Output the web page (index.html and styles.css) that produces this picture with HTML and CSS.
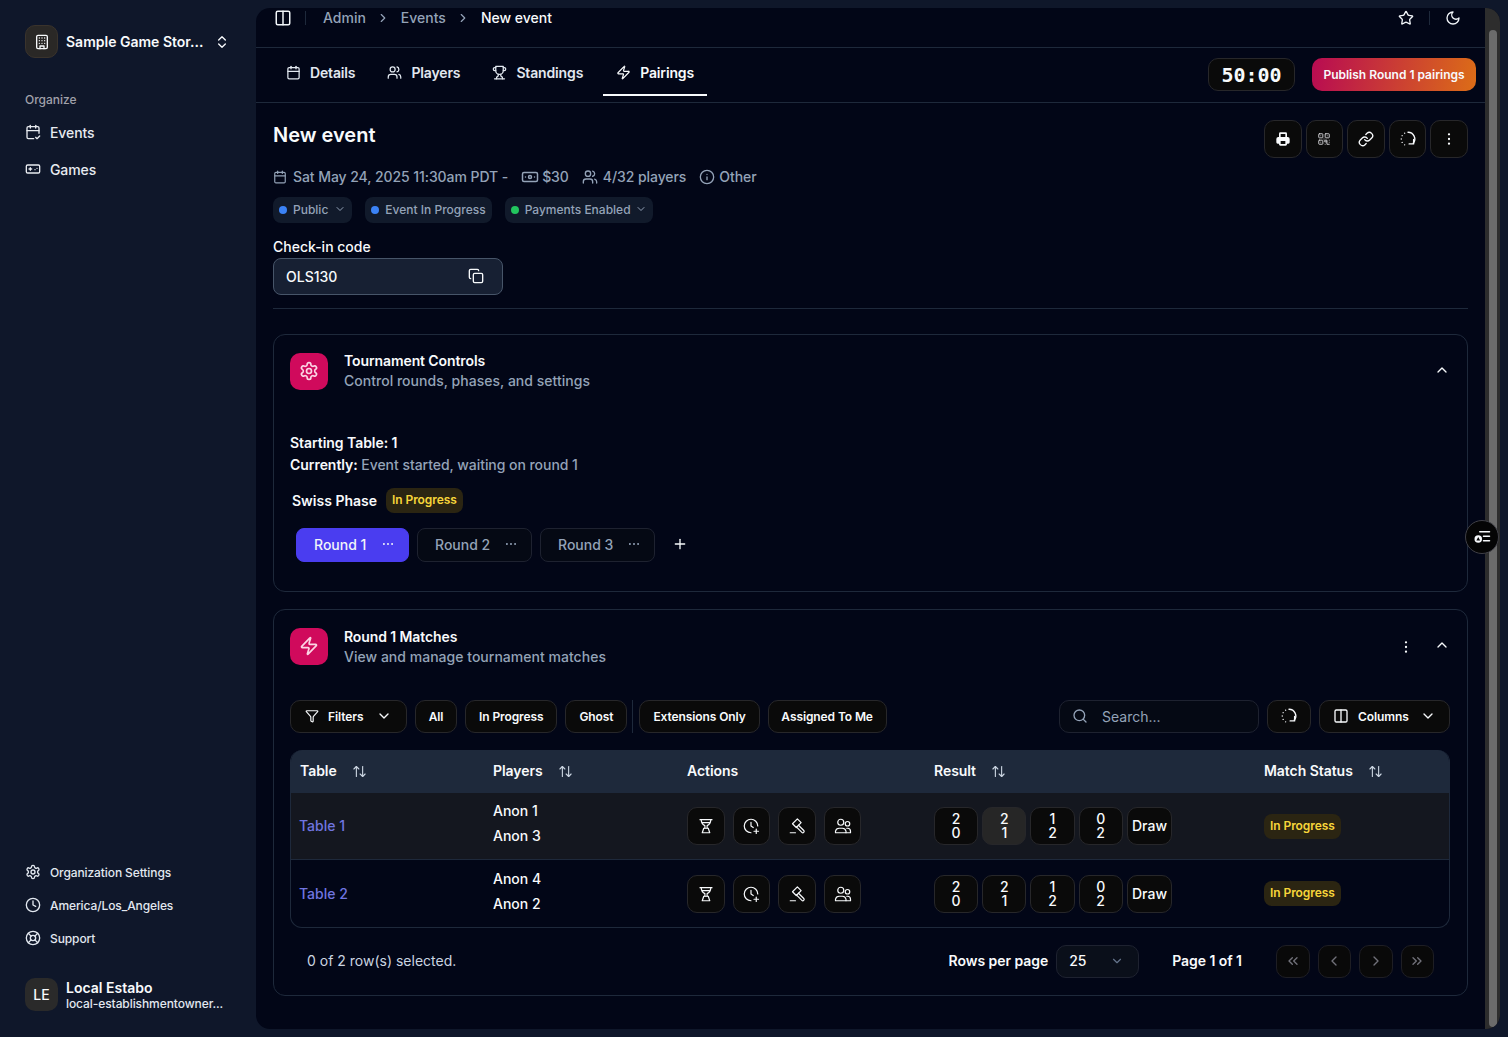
FILE: index.html
```html
<!DOCTYPE html>
<html lang="en">
<head>
  <meta charset="UTF-8">
  <title>New event</title>
  <link rel="stylesheet" href="styles.css">
</head>
<body>
  <!-- icon sprite -->
  <svg class="sprite" xmlns="http://www.w3.org/2000/svg">
    <symbol id="i-columns" viewBox="0 0 24 24"><rect x="3" y="3" width="18" height="18" rx="2"/><path d="M12 3v18"/></symbol>
    <symbol id="i-chev-right" viewBox="0 0 24 24"><path d="m9 18 6-6-6-6"/></symbol>
    <symbol id="i-chev-left" viewBox="0 0 24 24"><path d="m15 18-6-6 6-6"/></symbol>
    <symbol id="i-chev-down" viewBox="0 0 24 24"><path d="m6 9 6 6 6-6"/></symbol>
    <symbol id="i-chev-up" viewBox="0 0 24 24"><path d="m18 15-6-6-6 6"/></symbol>
    <symbol id="i-chevs-left" viewBox="0 0 24 24"><path d="m11 17-5-5 5-5"/><path d="m18 17-5-5 5-5"/></symbol>
    <symbol id="i-chevs-right" viewBox="0 0 24 24"><path d="m6 17 5-5-5-5"/><path d="m13 17 5-5-5-5"/></symbol>
    <symbol id="i-updown" viewBox="0 0 24 24"><path d="m7 15 5 5 5-5"/><path d="m7 9 5-5 5 5"/></symbol>
    <symbol id="i-star" viewBox="0 0 24 24"><path d="M11.525 2.295a.53.53 0 0 1 .95 0l2.31 4.679a2.123 2.123 0 0 0 1.595 1.16l5.166.756a.53.53 0 0 1 .294.904l-3.736 3.638a2.123 2.123 0 0 0-.611 1.878l.882 5.14a.53.53 0 0 1-.771.56l-4.618-2.428a2.122 2.122 0 0 0-1.973 0L6.396 21.01a.53.53 0 0 1-.77-.56l.881-5.139a2.122 2.122 0 0 0-.611-1.879L2.16 9.795a.53.53 0 0 1 .294-.906l5.165-.755a2.122 2.122 0 0 0 1.597-1.16z"/></symbol>
    <symbol id="i-moon" viewBox="0 0 24 24"><path d="M12 3a6 6 0 0 0 9 9 9 9 0 1 1-9-9Z"/></symbol>
    <symbol id="i-calendar" viewBox="0 0 24 24"><path d="M8 2v4"/><path d="M16 2v4"/><rect x="3" y="4" width="18" height="18" rx="2"/><path d="M3 10h18"/></symbol>
    <symbol id="i-calendar-check" viewBox="0 0 24 24"><path d="M8 2v4"/><path d="M16 2v4"/><path d="M21 14V6a2 2 0 0 0-2-2H5a2 2 0 0 0-2 2v14a2 2 0 0 0 2 2h8"/><path d="M3 10h18"/><path d="m16 20 2 2 4-4"/></symbol>
    <symbol id="i-users" viewBox="0 0 24 24"><path d="M16 21v-2a4 4 0 0 0-4-4H6a4 4 0 0 0-4 4v2"/><circle cx="9" cy="7" r="4"/><path d="M22 21v-2a4 4 0 0 0-3-3.87"/><path d="M16 3.13a4 4 0 0 1 0 7.75"/></symbol>
    <symbol id="i-trophy" viewBox="0 0 24 24"><path d="M6 9H4.500a2.500 2.500 0 0 1 0-5H6"/><path d="M18 9h1.500a2.500 2.500 0 0 0 0-5H18"/><path d="M4 22h16"/><path d="M10 14.660V17c0 .55-.47.98-.97 1.210C7.850 18.750 7 20.240 7 22"/><path d="M14 14.660V17c0 .55.47.98.97 1.210C16.150 18.750 17 20.240 17 22"/><path d="M18 2H6v7a6 6 0 0 0 12 0V2Z"/></symbol>
    <symbol id="i-zap" viewBox="0 0 24 24"><path d="M4 14a1 1 0 0 1-.78-1.63l9.9-10.2a.5.5 0 0 1 .86.46l-1.92 6.02A1 1 0 0 0 13 10h7a1 1 0 0 1 .78 1.63l-9.9 10.2a.5.5 0 0 1-.86-.46l1.92-6.02A1 1 0 0 0 11 14z"/></symbol>
    <symbol id="i-building" viewBox="0 0 24 24"><rect x="4" y="2" width="16" height="20" rx="2"/><path d="M9 22v-4h6v4"/><path d="M8 6h.01M12 6h.01M16 6h.01M8 10h.01M12 10h.01M16 10h.01M8 14h.01M12 14h.01M16 14h.01"/></symbol>
    <symbol id="i-game" viewBox="0 0 24 24"><rect x="2" y="6" width="20" height="12" rx="2"/><path d="M6 12h4"/><path d="M8 10v4"/><path d="M15 13h.01"/><path d="M18 11h.01"/></symbol>
    <symbol id="i-settings" viewBox="0 0 24 24"><path d="M12.22 2h-.44a2 2 0 0 0-2 2v.18a2 2 0 0 1-1 1.73l-.43.25a2 2 0 0 1-2 0l-.15-.08a2 2 0 0 0-2.73.73l-.22.38a2 2 0 0 0 .73 2.73l.15.1a2 2 0 0 1 1 1.72v.51a2 2 0 0 1-1 1.74l-.15.09a2 2 0 0 0-.73 2.73l.22.38a2 2 0 0 0 2.73.73l.15-.08a2 2 0 0 1 2 0l.43.25a2 2 0 0 1 1 1.73V20a2 2 0 0 0 2 2h.44a2 2 0 0 0 2-2v-.18a2 2 0 0 1 1-1.73l.43-.25a2 2 0 0 1 2 0l.15.08a2 2 0 0 0 2.73-.73l.22-.39a2 2 0 0 0-.73-2.73l-.15-.08a2 2 0 0 1-1-1.74v-.5a2 2 0 0 1 1-1.74l.15-.09a2 2 0 0 0 .73-2.73l-.22-.38a2 2 0 0 0-2.73-.73l-.15.08a2 2 0 0 1-2 0l-.43-.25a2 2 0 0 1-1-1.73V4a2 2 0 0 0-2-2z"/><circle cx="12" cy="12" r="3"/></symbol>
    <symbol id="i-clock" viewBox="0 0 24 24"><circle cx="12" cy="12" r="10"/><path d="M12 6v6l4 2"/></symbol>
    <symbol id="i-buoy" viewBox="0 0 24 24"><circle cx="12" cy="12" r="10"/><path d="m4.93 4.93 4.24 4.24"/><path d="m14.83 9.17 4.24-4.24"/><path d="m14.83 14.83 4.24 4.24"/><path d="m9.17 14.83-4.24 4.24"/><circle cx="12" cy="12" r="4"/></symbol>
    <symbol id="i-banknote" viewBox="0 0 24 24"><rect x="2" y="6" width="20" height="12" rx="2"/><circle cx="12" cy="12" r="2"/><path d="M6 12h.01M18 12h.01"/></symbol>
    <symbol id="i-info" viewBox="0 0 24 24"><circle cx="12" cy="12" r="10"/><path d="M12 16v-4"/><path d="M12 8h.01"/></symbol>
    <symbol id="i-copy" viewBox="0 0 24 24"><rect x="8" y="8" width="14" height="14" rx="2"/><path d="M4 16c-1.1 0-2-.9-2-2V4c0-1.1.9-2 2-2h10c1.1 0 2 .9 2 2"/></symbol>
    <symbol id="i-printer" viewBox="0 0 24 24"><path class="solid" d="M6 9V4a2 2 0 0 1 2-2h8a2 2 0 0 1 2 2v5h1a3 3 0 0 1 3 3v5a2 2 0 0 1-2 2h-2v1a2 2 0 0 1-2 2H8a2 2 0 0 1-2-2v-1H4a2 2 0 0 1-2-2v-5a3 3 0 0 1 3-3Zm2.500-4.500V9h7V4.500ZM8.500 15v4.500h7V15Z"/></symbol>
    <symbol id="i-qr" viewBox="0 0 24 24"><rect x="3" y="3" width="7" height="7" rx="1"/><rect x="14" y="3" width="7" height="7" rx="1"/><rect x="3" y="14" width="7" height="7" rx="1"/><path d="M14 14h3v3h-3zM21 14v.01M21 21h-4v-4M14 21v-.01M21 17.500v.01M6.500 6.500h.01M17.500 6.500h.01M6.500 17.500h.01M12 12h.01"/></symbol>
    <symbol id="i-link" viewBox="0 0 24 24"><path d="M10 13a5 5 0 0 0 7.54.54l3-3a5 5 0 0 0-7.07-7.07l-1.72 1.71"/><path d="M14 11a5 5 0 0 0-7.54-.54l-3 3a5 5 0 0 0 7.07 7.07l1.71-1.71"/></symbol>
    <symbol id="i-refresh" viewBox="0 0 24 24"><path d="M12 3a9 9 0 0 1 7 14.700"/><path d="M19.500 12.500v6h-6"/><path d="M7.500 4.200h.01M4.200 7.500h.01M3 12h.01M4.200 16.500h.01M7.500 19.800h.01"/></symbol>
    <symbol id="i-dots-v" viewBox="0 0 24 24"><path class="dots" d="M12 5h.01M12 12h.01M12 19h.01"/></symbol>
    <symbol id="i-dots-h" viewBox="0 0 24 24"><path class="dots" d="M5 12h.01M12 12h.01M19 12h.01"/></symbol>
    <symbol id="i-plus" viewBox="0 0 24 24"><path d="M5 12h14"/><path d="M12 5v14"/></symbol>
    <symbol id="i-filter" viewBox="0 0 24 24"><path d="M10 20a1 1 0 0 0 .553.895l2 1A1 1 0 0 0 14 21v-7a2 2 0 0 1 .517-1.341L21.740 4.670A1 1 0 0 0 21 3H3a1 1 0 0 0-.742 1.670l7.225 7.989A2 2 0 0 1 10 14z"/></symbol>
    <symbol id="i-search" viewBox="0 0 24 24"><circle cx="11" cy="11" r="8"/><path d="m21 21-4.300-4.300"/></symbol>
    <symbol id="i-sort" viewBox="0 0 24 24"><path d="m21 16-4 4-4-4"/><path d="M17 20V4"/><path d="m3 8 4-4 4 4"/><path d="M7 4v16"/></symbol>
    <symbol id="i-cup" viewBox="0 0 24 24"><path d="M4 3.500h16"/><path d="M5.500 3.500C6 8 8 10.500 10.500 11.500V15"/><path d="M18.500 3.500C18 8 16 10.500 13.500 11.500V15"/><path d="M7 7.500h10"/><path d="M9 15h6l2 6H7z"/></symbol>
    <symbol id="i-timer-plus" viewBox="0 0 24 24"><path d="M21 12a9 9 0 1 0-9 9"/><path d="M12 7v5l3 2"/><path d="M19 16v6"/><path d="M16 19h6"/></symbol>
    <symbol id="i-gavel" viewBox="0 0 24 24"><path d="M12.500 2.500 6 9l5 5 6.500-6.500z"/><path d="m14 11 7 7a1.500 1.500 0 0 1-2.500 2.500l-7-7"/><path d="M3 21h7"/></symbol>
    <symbol id="i-people" viewBox="0 0 24 24"><circle cx="9" cy="7" r="4"/><circle cx="18" cy="9" r="3"/><path d="M2 21v-2a5 5 0 0 1 5-4h4a5 5 0 0 1 5 4v2z"/><path d="M17 15h1a4 4 0 0 1 4 4v2h-6"/></symbol>
    <symbol id="i-toggle" viewBox="0 0 24 24"><path d="M9 5h13"/><path d="M14 11h8"/><path d="M14 17h8"/><circle class="solid" cx="7" cy="14.500" r="5"/><path class="notch" d="M7 12l2.500 4.500h-5z"/></symbol>
  </svg>

  <aside class="sidebar">
    <div class="org">
      <div class="org-logo"><svg class="icon i16"><use href="#i-building"/></svg></div>
      <span class="org-name">Sample Game Stor...</span>
      <svg class="icon i16 org-switch"><use href="#i-updown"/></svg>
    </div>

    <div class="nav-title">Organize</div>
    <a class="nav-item"><svg class="icon i16"><use href="#i-calendar-check"/></svg>Events</a>
    <a class="nav-item"><svg class="icon i16"><use href="#i-game"/></svg>Games</a>

    <div class="side-bottom">
      <a class="foot-item"><svg class="icon i16"><use href="#i-settings"/></svg>Organization Settings</a>
      <a class="foot-item"><svg class="icon i16"><use href="#i-clock"/></svg>America/Los_Angeles</a>
      <a class="foot-item"><svg class="icon i16"><use href="#i-buoy"/></svg>Support</a>
      <div class="user">
        <div class="avatar">LE</div>
        <div>
          <div class="user-name">Local Estabo</div>
          <div class="user-mail">local-establishmentowner...</div>
        </div>
      </div>
    </div>
  </aside>

  <div class="panel">
    <main class="main">
      <header class="topbar">
        <svg class="icon i18"><use href="#i-columns"/></svg>
        <span class="vline"></span>
        <nav class="crumbs">
          <span>Admin</span><svg class="icon i14"><use href="#i-chev-right"/></svg>
          <span>Events</span><svg class="icon i14"><use href="#i-chev-right"/></svg>
          <span class="crumb-now">New event</span>
        </nav>
        <div class="top-right">
          <svg class="icon i16"><use href="#i-star"/></svg>
          <span class="vline"></span>
          <svg class="icon i16"><use href="#i-moon"/></svg>
        </div>
      </header>

      <div class="tabbar">
        <a class="tab"><svg class="icon i16"><use href="#i-calendar"/></svg>Details</a>
        <a class="tab"><svg class="icon i16"><use href="#i-users"/></svg>Players</a>
        <a class="tab"><svg class="icon i16"><use href="#i-trophy"/></svg>Standings</a>
        <a class="tab active"><svg class="icon i16"><use href="#i-zap"/></svg>Pairings</a>
        <div class="timer">50:00</div>
        <button class="publish">Publish Round 1 pairings</button>
      </div>

      <div class="content">
        <div class="title-row">
          <h1>New event</h1>
          <div class="title-actions">
            <button class="sq"><svg class="icon i16"><use href="#i-printer"/></svg></button>
            <button class="sq"><svg class="icon i14 qr"><use href="#i-qr"/></svg></button>
            <button class="sq"><svg class="icon i16"><use href="#i-link"/></svg></button>
            <button class="sq"><svg class="icon i18 refresh"><use href="#i-refresh"/></svg></button>
            <button class="sq"><svg class="icon i16"><use href="#i-dots-v"/></svg></button>
          </div>
        </div>

        <div class="meta">
          <span class="meta-item meta-date"><svg class="icon i14"><use href="#i-calendar"/></svg>Sat May 24, 2025 11:30am PDT -</span>
          <span class="meta-item meta-price"><svg class="icon i18"><use href="#i-banknote"/></svg>$30</span>
          <span class="meta-item"><svg class="icon i16"><use href="#i-users"/></svg>4/32 players</span>
          <span class="meta-item meta-type"><svg class="icon i16"><use href="#i-info"/></svg>Other</span>
        </div>

        <div class="tags">
          <span class="tag tag-public"><i class="dot blue"></i>Public<svg class="icon i12"><use href="#i-chev-down"/></svg></span>
          <span class="tag"><i class="dot blue"></i>Event In Progress</span>
          <span class="tag"><i class="dot green"></i>Payments Enabled<svg class="icon i12"><use href="#i-chev-down"/></svg></span>
        </div>

        <div class="code-label">Check-in code</div>
        <div class="code-box">OLS130<svg class="icon i16"><use href="#i-copy"/></svg></div>
        <hr class="divider">

        <section class="card controls">
          <div class="card-head">
            <div class="card-icon"><svg class="icon i20"><use href="#i-settings"/></svg></div>
            <div class="card-text">
              <div class="card-title">Tournament Controls</div>
              <div class="card-sub">Control rounds, phases, and settings</div>
            </div>
            <svg class="icon i16 collapse"><use href="#i-chev-up"/></svg>
          </div>

          <div class="state">
            <div class="state-line"><b>Starting Table: 1</b></div>
            <div class="state-line"><b>Currently:</b> Event started, waiting on round 1</div>
          </div>

          <div class="phase"><b>Swiss Phase</b><span class="badge">In Progress</span></div>

          <div class="rounds">
            <button class="round current">Round 1<svg class="icon i14"><use href="#i-dots-h"/></svg></button>
            <button class="round">Round 2<svg class="icon i14"><use href="#i-dots-h"/></svg></button>
            <button class="round">Round 3<svg class="icon i14"><use href="#i-dots-h"/></svg></button>
            <svg class="icon i16 add-round"><use href="#i-plus"/></svg>
          </div>
        </section>

        <section class="card matches">
          <div class="card-head">
            <div class="card-icon"><svg class="icon i20"><use href="#i-zap"/></svg></div>
            <div class="card-text">
              <div class="card-title">Round 1 Matches</div>
              <div class="card-sub">View and manage tournament matches</div>
            </div>
            <svg class="icon i16 card-more"><use href="#i-dots-v"/></svg>
            <svg class="icon i16 collapse"><use href="#i-chev-up"/></svg>
          </div>

          <div class="toolbar">
            <button class="tool tool-filters"><svg class="icon i14"><use href="#i-filter"/></svg>Filters<svg class="icon i16"><use href="#i-chev-down"/></svg></button>
            <button class="tool tool-all">All</button>
            <button class="tool">In Progress</button>
            <button class="tool">Ghost</button>
            <span class="tool-sep"></span>
            <button class="tool">Extensions Only</button>
            <button class="tool tool-me">Assigned To Me</button>
            <div class="search"><svg class="icon i16"><use href="#i-search"/></svg>Search...</div>
            <button class="tool tool-refresh"><svg class="icon i18 refresh"><use href="#i-refresh"/></svg></button>
            <button class="tool tool-cols"><svg class="icon i16"><use href="#i-columns"/></svg>Columns<svg class="icon i16"><use href="#i-chev-down"/></svg></button>
          </div>

          <div class="table-wrap">
            <table>
              <thead>
                <tr>
                  <th class="c-table">Table<svg class="icon i16"><use href="#i-sort"/></svg></th>
                  <th class="c-players">Players<svg class="icon i16"><use href="#i-sort"/></svg></th>
                  <th class="c-actions">Actions</th>
                  <th class="c-result">Result<svg class="icon i16"><use href="#i-sort"/></svg></th>
                  <th>Match Status<svg class="icon i16"><use href="#i-sort"/></svg></th>
                </tr>
              </thead>
              <tbody>
                <tr class="row-hover">
                  <td class="link-cell"><a class="table-link">Table 1</a></td>
                  <td class="names"><div>Anon 1</div><div>Anon 3</div></td>
                  <td>
                    <div class="cell-btns actions">
                      <button class="sq"><svg class="icon"><use href="#i-cup"/></svg></button>
                      <button class="sq"><svg class="icon"><use href="#i-timer-plus"/></svg></button>
                      <button class="sq"><svg class="icon"><use href="#i-gavel"/></svg></button>
                      <button class="sq"><svg class="icon"><use href="#i-people"/></svg></button>
                    </div>
                  </td>
                  <td>
                    <div class="cell-btns scores">
                      <button class="score">2<br>0</button>
                      <button class="score lit">2<br>1</button>
                      <button class="score">1<br>2</button>
                      <button class="score">0<br>2</button>
                      <button class="score draw">Draw</button>
                    </div>
                  </td>
                  <td><span class="badge">In Progress</span></td>
                </tr>
                <tr>
                  <td class="link-cell"><a class="table-link">Table 2</a></td>
                  <td class="names"><div>Anon 4</div><div>Anon 2</div></td>
                  <td>
                    <div class="cell-btns actions">
                      <button class="sq"><svg class="icon"><use href="#i-cup"/></svg></button>
                      <button class="sq"><svg class="icon"><use href="#i-timer-plus"/></svg></button>
                      <button class="sq"><svg class="icon"><use href="#i-gavel"/></svg></button>
                      <button class="sq"><svg class="icon"><use href="#i-people"/></svg></button>
                    </div>
                  </td>
                  <td>
                    <div class="cell-btns scores">
                      <button class="score">2<br>0</button>
                      <button class="score">2<br>1</button>
                      <button class="score">1<br>2</button>
                      <button class="score">0<br>2</button>
                      <button class="score draw">Draw</button>
                    </div>
                  </td>
                  <td><span class="badge">In Progress</span></td>
                </tr>
              </tbody>
            </table>
          </div>

          <div class="pager">
            <span class="selected">0 of 2 row(s) selected.</span>
            <span class="pager-label">Rows per page</span>
            <div class="per-page">25<svg class="icon i14"><use href="#i-chev-down"/></svg></div>
            <span class="pager-label page-no">Page 1 of 1</span>
            <div class="pager-btns">
              <button class="pg"><svg class="icon i16"><use href="#i-chevs-left"/></svg></button>
              <button class="pg"><svg class="icon i16"><use href="#i-chev-left"/></svg></button>
              <button class="pg"><svg class="icon i16"><use href="#i-chev-right"/></svg></button>
              <button class="pg"><svg class="icon i16"><use href="#i-chevs-right"/></svg></button>
            </div>
          </div>
        </section>
      </div>
    </main>
    <div class="scrollbar"><div class="thumb"></div></div>
  </div>

  <button class="float-btn"><svg class="icon i18"><use href="#i-toggle"/></svg></button>
</body>
</html>
```

FILE: styles.css
```css
* { box-sizing: border-box; }

html, body { height: 100%; }

body {
  margin: 0;
  height: 1037px;
  overflow: hidden;
  display: flex;
  font-family: Inter, "Noto Sans", sans-serif;
  font-size: 14px;
  color: #f8fafc;
  background-color: #0f172a;
}

button {
  font-family: inherit;
  color: inherit;
  cursor: pointer;
}

.sprite { position: absolute; width: 0; height: 0; }

.icon {
  fill: none;
  stroke: currentColor;
  stroke-width: 2;
  stroke-linecap: round;
  stroke-linejoin: round;
  flex-shrink: 0;
}
.i12 { width: 12px; height: 12px; }
.i14 { width: 14px; height: 14px; }
.i16 { width: 16px; height: 16px; }
.i18 { width: 18px; height: 18px; }
.i20 { width: 20px; height: 20px; }
.solid { fill: currentColor; stroke: none; fill-rule: evenodd; }
.dots { stroke-width: 3.4; }
.notch { fill: #050505; stroke: none; }
.refresh { stroke-width: 1.8; }

/* sidebar */
.sidebar {
  width: 256px;
  flex-shrink: 0;
  height: 100%;
  display: flex;
  flex-direction: column;
  padding: 25px 0 26px 25px;
}
.org { display: flex; align-items: center; height: 33px; }
.org-logo {
  width: 33px;
  height: 33px;
  border-radius: 10px;
  background-color: #2a2826;
  border: 1px solid #3a332c;
  display: flex;
  align-items: center;
  justify-content: center;
  margin-right: 8px;
}
.org-name { font-weight: 600; width: 148px; white-space: nowrap; }
.org-switch { margin-left: 0; }
.nav-title { margin-top: 34px; font-size: 12px; font-weight: 500; line-height: 16px; color: #a1a1aa; margin-bottom: 14px; }
.nav-item {
  display: flex;
  align-items: center;
  gap: 9px;
  height: 20px;
  margin-bottom: 17px;
  font-weight: 500;
  color: #e8ebf0;
  letter-spacing: -0.1px;
}
.side-bottom { margin-top: auto; }
.foot-item {
  display: flex;
  align-items: center;
  gap: 9px;
  height: 20px;
  margin-bottom: 13px;
  font-size: 12px;
  font-weight: 500;
  color: #e2e8f0;
  letter-spacing: -0.1px;
}
.user { display: flex; align-items: center; gap: 8px; margin-top: 30px; }
.avatar {
  width: 33px;
  height: 33px;
  border-radius: 10px;
  background-color: #2a2a2a;
  display: flex;
  align-items: center;
  justify-content: center;
  font-size: 14px;
  font-weight: 500;
}
.user-name { font-weight: 600; line-height: 17px; }
.user-mail { font-size: 12px; font-weight: 500; line-height: 15px; color: #e2e8f0; white-space: nowrap; letter-spacing: -0.08px; }

/* main panel */
.panel {
  width: 1244px;
  height: 1021px;
  margin-top: 8px;
  display: flex;
  overflow: hidden;
  border-radius: 14px;
  background-color: #020617;
}
.main { width: 1229px; flex-shrink: 0; }
.scrollbar { flex: 1; background-color: #2d2d2d; padding: 22px 3px 2px 4px; }
.thumb { height: 100%; background-color: #6b6b6b; border-radius: 4px; }

.topbar {
  height: 40px;
  display: flex;
  align-items: center;
  padding: 0 24px 20px 18px;
  border-bottom: 1px solid #1e293b;
  color: #f1f5f9;
}
.vline { width: 1px; height: 14px; background-color: #1e293b; margin: 0 17px 0 13px; }
.crumbs { display: flex; align-items: center; gap: 10.5px; color: #94a3b8; font-weight: 500; }
.crumb-now { color: #f8fafc; }
.top-right { margin-left: auto; display: flex; align-items: center; }
.top-right .vline { margin: 0 15px; }

.tabbar {
  height: 55px;
  display: flex;
  align-items: flex-start;
  gap: 6px;
  padding: 2px 9px 0 17px;
  border-bottom: 1px solid #1e293b;
}
.tab {
  display: flex;
  align-items: center;
  gap: 9px;
  height: 46px;
  padding: 0 13px;
  font-weight: 600;
  color: #e2e8f0;
  letter-spacing: -0.15px;
  border-bottom: 2px solid transparent;
}
.tab .icon { width: 15px; height: 15px; }
.tab.active { margin-left: 1px; border-bottom-color: #f8fafc; color: #f8fafc; }
.timer {
  margin: 8px 0 0 auto;
  width: 87px;
  height: 33px;
  border: 1px solid #27272a;
  border-radius: 10px;
  background-color: #0a0a0a;
  font-family: "DejaVu Sans Mono", monospace;
  font-size: 20px;
  font-weight: 700;
  line-height: 32px;
  text-align: center;
}
.publish {
  margin: 8px 0 0 11px;
  width: 164px;
  height: 33px;
  border: none;
  border-radius: 10px;
  background: linear-gradient(100deg, #b80b52, #dc6d17);
  font-size: 12px;
  font-weight: 600;
}

.content { padding: 17px 17px 0; }
.title-row { display: flex; justify-content: space-between; align-items: flex-start; }
h1 { margin: 3px 0 0; font-size: 20px; font-weight: 600; line-height: 24px; }
.title-actions { display: flex; gap: 4px; }
.title-actions .sq { width: 37.6px; height: 37.6px; }

.sq {
  width: 37.6px;
  height: 38px;
  padding: 0;
  border: 1px solid #27272a;
  border-radius: 10px;
  background-color: #0a0a0a;
  display: flex;
  align-items: center;
  justify-content: center;
}
.qr { stroke-width: 1.6; color: #d4d4d8; }

.meta { display: flex; align-items: center; gap: 13px; margin-top: 9.4px; height: 20px; color: #94a3b8; font-weight: 500; letter-spacing: -0.07px; }
.meta-item { display: flex; align-items: center; gap: 5px; }
.meta-date { gap: 6px; }
.meta-price { gap: 3px; }
.meta-type { gap: 4px; }
.tags { display: flex; gap: 13px; margin-top: 10px; }
.tag {
  display: flex;
  align-items: center;
  height: 26px;
  padding: 0 6px 1px;
  border-radius: 8px;
  background-color: #111a2b;
  font-size: 12px;
  font-weight: 500;
  color: #94a3b8;
}
.tag .icon { margin-left: 4px; }
.tag-public .icon { margin-left: 6px; }
.dot { width: 8px; height: 8px; border-radius: 50%; margin: 1px 6px 0 0; }
.dot.blue { background-color: #3b82f6; }
.dot.green { background-color: #22c55e; }

.code-label { margin-top: 14px; line-height: 20px; font-weight: 500; }
.code-box {
  width: 230px;
  height: 37px;
  margin-top: 1px;
  padding: 0 18px 0 12px;
  display: flex;
  align-items: center;
  justify-content: space-between;
  border: 1px solid #475569;
  border-radius: 8px;
  background-color: #172033;
  font-weight: 500;
}
.divider { border: none; border-top: 1px solid #1e293b; margin: 13px 0 25px; }

/* cards */
.card { border: 1px solid #1e293b; border-radius: 12px; padding: 18px 17px 0 16px; }
.controls { height: 258px; }
.matches { margin-top: 17px; height: 387px; }
.card-head { display: flex; align-items: center; height: 38px; }
.card-icon {
  width: 38px;
  height: 37px;
  border-radius: 10px;
  background-color: #d00a5c;
  display: flex;
  align-items: center;
  justify-content: center;
  color: #fbd5e4;
  margin-right: 16px;
  align-self: flex-start;
}
.card-title { font-weight: 600; line-height: 20px; margin-top: -2px; letter-spacing: -0.1px; }
.matches .card-title { margin-top: 0; }
.card-sub { font-weight: 500; line-height: 20px; color: #94a3b8; letter-spacing: 0.02px; }
.collapse { margin: 0 0 4px; }
.card-text { margin-right: auto; }
.card-more { margin-right: 20px; }

.state { margin-top: 41px; }
.state-line { line-height: 22px; color: #94a3b8; font-weight: 500; letter-spacing: -0.05px; }
.state-line b { color: #f8fafc; font-weight: 600; }
.phase { display: flex; align-items: center; gap: 9px; margin: 12px 0 0 2px; }
.phase b { font-weight: 600; }
.badge {
  display: inline-block;
  height: 25px;
  padding: 0 6px;
  border-radius: 8px;
  background-color: #2b2512;
  color: #f7d53a;
  font-size: 12px;
  font-weight: 600;
  line-height: 24px;
  letter-spacing: -0.07px;
}
.rounds { display: flex; align-items: center; gap: 8px; margin: 15px 0 0 6px; }
.round {
  width: 115px;
  height: 34px;
  padding: 0 13px 1px 17px;
  border: 1px solid #1e2230;
  border-radius: 8px;
  background-color: #050914;
  color: #94a3b8;
  font-size: 14px;
  font-weight: 500;
  display: flex;
  align-items: center;
  justify-content: space-between;
}
.round.current { width: 113px; background-color: #4a3df0; border-color: #4a3df0; color: #f1f5f9; }
.add-round { margin: 0 0 1px 9px; }

.toolbar { display: flex; align-items: center; gap: 8px; margin-top: 34px; }
.tool {
  height: 33px;
  padding: 0 13px;
  border: 1px solid #27272a;
  border-radius: 10px;
  background-color: #0a0a0a;
  font-size: 12px;
  font-weight: 600;
  letter-spacing: -0.1px;
  display: flex;
  align-items: center;
  flex-shrink: 0;
}
.tool-filters { width: 117px; gap: 9px; padding: 0 14px; }
.tool-filters .icon:last-child { margin-left: auto; }
.tool-all { width: 42px; padding: 0; justify-content: center; }
.tool-me { width: 119px; padding: 0; justify-content: center; }
.tool-sep { width: 1px; height: 33px; background-color: #1e293b; margin: 0 -2px 0 -3px; }
.search {
  width: 200px;
  height: 33px;
  margin-left: auto;
  padding: 0 12px;
  display: flex;
  align-items: center;
  gap: 14px;
  border: 1px solid #1e2230;
  border-radius: 10px;
  background-color: #050914;
  color: #94a3b8;
  font-weight: 400;
}
.tool-refresh { width: 44px; padding: 0; justify-content: center; }
.tool-cols { width: 131px; gap: 9px; padding: 0 13px; }
.tool-cols .icon:last-child { margin-left: auto; }

.table-wrap { margin-top: 17px; border: 1px solid #1e293b; border-top: none; border-radius: 12px; overflow: hidden; }
table { width: 100%; border-collapse: collapse; table-layout: fixed; }
th {
  height: 43px;
  padding: 0 9px 2px;
  background-color: #1e293b;
  text-align: left;
  font-weight: 600;
  letter-spacing: -0.05px;
}
th .icon { width: 15px; height: 15px; margin-left: 15px; vertical-align: -3px; color: #cbd5e1; stroke-width: 1.8; }
.c-table { width: 193px; }
.c-players { width: 194px; }
.c-actions { width: 247px; }
.c-result { width: 330px; }
td { height: 67px; padding: 0 9px; font-weight: 500; }
tbody tr:first-child { border-bottom: 1px solid #1e293b; }
.row-hover { background-color: #14171f; }
.table-link { color: #7075e0; margin-left: -1px; }
td.names { padding-bottom: 5px; }
.row-hover td.names { padding-bottom: 7px; }
.row-hover td.link-cell { padding-bottom: 2px; }
.names div { line-height: 25px; }
.cell-btns { display: flex; }
.actions { gap: 8px; }
.actions .icon { width: 18px; height: 18px; stroke-width: 1.6; }
.scores { gap: 4px; }
.score {
  width: 44.2px;
  height: 38px;
  padding: 0;
  border: 1px solid #27272a;
  border-radius: 10px;
  background-color: #0a0a0a;
  font-size: 14px;
  font-weight: 500;
  line-height: 14px;
}
.score.lit { background-color: #262626; }
.score.draw { width: 45.5px; }

.pager { display: flex; align-items: center; margin-top: 17px; padding: 0 16px 0 17px; }
.pager span { padding-bottom: 2px; }
.selected { color: #cbd5e1; font-weight: 400; margin-right: auto; }
.pager-label { font-weight: 600; letter-spacing: -0.05px; }
.page-no { margin: 0 34px 0 33px; }
.per-page {
  width: 83px;
  height: 33px;
  margin-left: 8px;
  padding: 0 14px 1px 12px;
  display: flex;
  align-items: center;
  justify-content: space-between;
  border: 1px solid #1e2230;
  border-radius: 10px;
  background-color: #0a0f1a;
  font-weight: 500;
}
.per-page .icon { color: #64748b; }
.pager-btns { display: flex; gap: 8px; }
.pg {
  width: 33.5px;
  height: 33px;
  padding: 0;
  border: 1px solid #1e1e24;
  border-radius: 10px;
  background-color: #090909;
  color: #71717a;
  display: flex;
  align-items: center;
  justify-content: center;
}

.float-btn {
  position: absolute;
  left: 1465px;
  top: 520px;
  width: 34px;
  height: 34px;
  padding: 0;
  border: 1px solid #3f3f46;
  border-radius: 50%;
  background-color: #050505;
  display: flex;
  align-items: center;
  justify-content: center;
}
```
